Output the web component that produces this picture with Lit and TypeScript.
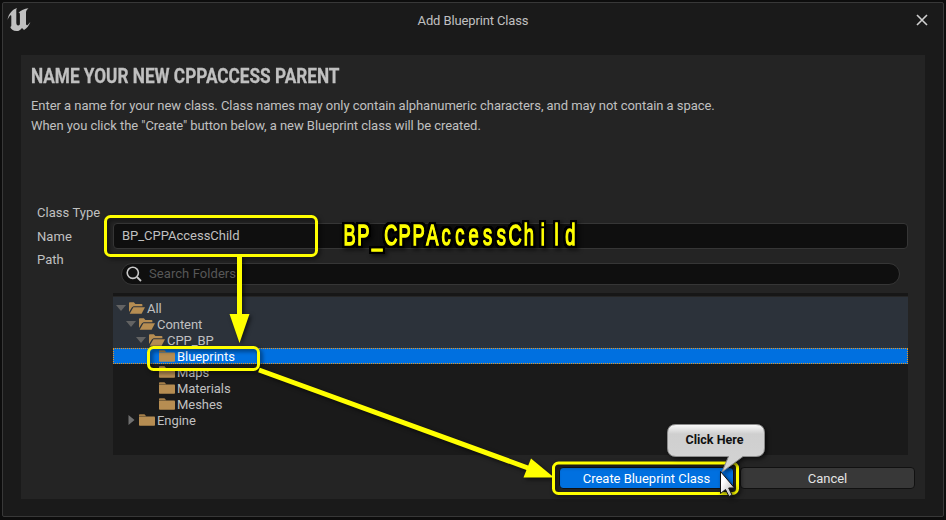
import { LitElement, html, svg, css } from "lit";
import { customElement } from "lit/decorators.js";
import { classMap } from "lit/directives/class-map.js";

interface Folder {
  name: string;
  depth: number;
  state: "open" | "closed" | "leaf";
  tint?: boolean;
  selected?: boolean;
}

const FOLDERS: Folder[] = [
  { name: "All", depth: 0, state: "open", tint: true },
  { name: "Content", depth: 1, state: "open", tint: true },
  { name: "CPP_BP", depth: 2, state: "open", tint: true },
  { name: "Blueprints", depth: 3, state: "leaf", selected: true },
  { name: "Maps", depth: 3, state: "leaf" },
  { name: "Materials", depth: 3, state: "leaf" },
  { name: "Meshes", depth: 3, state: "leaf" },
  { name: "Engine", depth: 1, state: "closed" },
];

const closedFolder = html`<svg width="16" height="12" viewBox="0 0 16 12">
  <path d="M0 2.2V1Q0 .3 .7 .3H5.5L7.2 2.2Z" fill="#a57f49" />
  <path d="M0 2.6H15.2Q16 2.6 16 3.4V11Q16 11.8 15.2 11.8H.8Q0 11.8 0 11Z" fill="#b68d52" />
</svg>`;

const openFolder = html`<svg width="16" height="12" viewBox="0 0 16 12">
  <path d="M0 10V1Q0 .2 .8 .2H4.8L6.4 2H12.6Q13.4 2 13.4 2.8V4.2H4.6L3 5.2Z" fill="#b68d52" />
  <path d="M4.4 5.2H16L12.6 11.8H.7Z" fill="#b68d52" />
</svg>`;

@customElement("folder-row")
class FolderRow extends LitElement {
  static properties = { folder: { attribute: false } };
  declare folder: Folder;

  static styles = css`
    :host { display: block; }
    .row {
      height: 16px;
      display: flex;
      align-items: center;
      box-sizing: border-box;
      color: #c0c0c0;
      font-size: 13px;
      line-height: 16px;
      letter-spacing: -0.05px;
      white-space: pre;
    }
    .tint { background: #2c323a; }
    .selected {
      background: #0070e0;
      color: #fff;
      outline: 1px dotted #e8951c;
      outline-offset: -1px;
    }
    .twist { width: 16px; height: 16px; display: flex; align-items: center; justify-content: center; }
    .folder { width: 16px; height: 12px; margin-right: 2px; flex: none; }
    .text { padding-top: 2px; }
    svg { display: block; }
  `;

  render() {
    const f = this.folder;
    return html`<div
      class=${classMap({ row: true, tint: !!f.tint, selected: !!f.selected })}
      style="padding-left:${f.depth * 10}px"
    ><span class="twist">${f.state === "open"
        ? html`<svg width="10" height="8"><path d="M0 1H10L5 7Z" fill="#636363" /></svg>`
        : f.state === "closed"
          ? html`<svg width="8" height="10"><path d="M1.5 0V10L7.5 5Z" fill="#707070" /></svg>`
          : ""}</span><span class="folder">${f.state === "open" ? openFolder : closedFolder}</span><span class="text">${f.name}</span></div>`;
  }
}

const CALLOUT = "BP_CPPAccessChild";

@customElement("app-root")
class AppRoot extends LitElement {
  static styles = css`
    :host {
      display: block;
      position: relative;
      width: 946px;
      height: 520px;
      box-sizing: border-box;
      padding: 2px 2px 3px;
      background: #0d0d0d;
      overflow: hidden;
      font-family: Roboto, "Liberation Sans", sans-serif;
      font-size: 13px;
      color: #c0c0c0;
    }
    svg { display: block; }
    .window {
      height: 515px;
      box-sizing: border-box;
      border: 1px solid #383838;
      border-radius: 2px;
      background: #1a1a1a;
      display: flex;
      flex-direction: column;
      padding: 0 18px;
    }
    .titlebar {
      height: 52px;
      margin: 0 -18px;
      display: grid;
      grid-template-columns: 40px 1fr 40px;
      align-items: start;
      flex: none;
    }
    .logo { padding: 4px 0 0 4px; }
    .title { text-align: center; line-height: 16px; padding-top: 10px; letter-spacing: -0.13px; }
    .close { padding: 11px 0 0 13px; }
    .panel {
      width: 904px;
      height: 444px;
      box-sizing: border-box;
      background: #242424;
      padding: 8px 10px 0;
      display: flex;
      flex-direction: column;
    }
    h1 {
      margin: 0;
      font-size: 21px;
      line-height: 26px;
      font-weight: 700;
      white-space: nowrap;
      transform-origin: 0 50%;
      transform: scaleX(0.819);
      -webkit-text-stroke: 0.3px #c0c0c0;
    }
    .intro { margin: 7px 0 0; line-height: 20px; letter-spacing: -0.045px; }
    .form {
      margin-top: 66px;
      padding-left: 6px;
      display: grid;
      grid-template-columns: 76px 795px;
      grid-template-rows: 21px 26px 14px 22px;
    }
    .label { line-height: 16px; letter-spacing: 0.05px; align-self: center; }
    .label.type { align-self: end; grid-row: 1; padding-bottom: 2px; }
    .label.name { grid-row: 2; padding-top: 2px; }
    .label.path { grid-row: 3 / 5; align-self: start; padding-top: 3px; }
    .name-input {
      grid-column: 2;
      grid-row: 2;
      border: 1px solid #363636;
      border-radius: 4px;
      background: #0f0f0f;
      padding-left: 8px;
      line-height: 24px;
      letter-spacing: -0.02px;
    }
    .search {
      grid-column: 2;
      grid-row: 4;
      margin: 0 8px;
      border: 1px solid #363636;
      border-radius: 12px;
      background: #0f0f0f;
      display: flex;
      align-items: center;
      gap: 7px;
      padding-left: 4px;
      color: #575757;
      letter-spacing: 0.07px;
    }
    .hint { padding-bottom: 2px; }
    .tree {
      margin: 8px 0 0 82px;
      width: 795px;
      height: 162px;
      box-sizing: border-box;
      border-top: 3px solid #171717;
      background: #1a1a1a;
    }
    .tree-head { height: 4px; background: #2c323a; border-top: 1px solid #262626; box-sizing: border-box; }
    .actions {
      margin: 12px 0 0;
      display: flex;
      justify-content: flex-end;
      gap: 6px;
    }
    .button {
      width: 175px;
      height: 22px;
      box-sizing: border-box;
      border: 1px solid #111;
      border-radius: 4px;
      background: #383838;
      color: #e4e4e4;
      text-align: center;
      line-height: 22px;
      letter-spacing: -0.03px;
    }
    .primary { background: #0070e0; color: #fff; }
    .overlay { position: absolute; inset: 0; }
    .shadow { filter: drop-shadow(2px 2px 2px rgba(0, 0, 0, 0.6)); }
    .callout {
      font: 400 29px "Liberation Sans", sans-serif;
      fill: #ffff00;
      stroke: #ffff00;
      stroke-width: 1.4px;
      text-anchor: middle;
    }
    .bubble-text { font: 700 12.5px Roboto, sans-serif; fill: #111; text-anchor: middle; }
  `;

  private annotations() {
    const xs = [...CALLOUT].map((_, i) => ((7.5 + i * 13.8) / 0.63).toFixed(1)).join(" ");
    return svg`
      <defs>
        <linearGradient id="bubble" x1="0" y1="0" x2="0" y2="1">
          <stop offset="0" stop-color="#fafafa" />
          <stop offset=".2" stop-color="#cfcfcf" />
          <stop offset="1" stop-color="#d4d4d4" />
        </linearGradient>
        <linearGradient id="cursor" x1="0" y1="0" x2="1" y2="1">
          <stop offset=".3" stop-color="#fff" />
          <stop offset="1" stop-color="#aaa" />
        </linearGradient>
        <filter id="outline" filterUnits="userSpaceOnUse" x="330" y="210" width="260" height="50" color-interpolation-filters="sRGB">
          <feMorphology in="SourceAlpha" operator="dilate" radius="2" result="fat" />
          <feGaussianBlur in="fat" stdDeviation=".7" result="soft" />
          <feComponentTransfer in="soft" result="edge"><feFuncA type="linear" slope="2.5" /></feComponentTransfer>
          <feMerge><feMergeNode in="edge" /><feMergeNode in="SourceGraphic" /></feMerge>
        </filter>
      </defs>
      <g class="shadow" fill="none" stroke="#ffff00" stroke-width="3">
        <rect x="105.5" y="216.5" width="211" height="39" rx="5" />
        <path d="M239.5 256V316" stroke-width="5" />
        <path d="M229.5 314H249.5L239.5 343Z" fill="#ffff00" stroke="none" />
        <rect x="148.5" y="347.5" width="110" height="22" rx="5" />
        <path d="M259 370L528 468" stroke-width="5" />
        <path d="M531 458.500L554 477.500L523.500 477.500Z" fill="#ffff00" stroke="none" />
        <rect x="553.5" y="463" width="184" height="30.5" rx="5" />
      </g>
      <g class="shadow"><g filter="url(#outline)"><g transform="translate(342 245) scale(.63 1)">
        <text class="callout" x=${xs} y="0">${CALLOUT}</text>
      </g></g></g>
      <g class="shadow">
        <path d="M676 424.5H756Q764.5 424.5 764.5 433V448Q764.5 456.5 756 456.5H743L722 472L728.5 456.5H676Q667.5 456.5 667.5 448V433Q667.5 424.5 676 424.5Z" fill="url(#bubble)" stroke="#8b8b8b" />
      </g>
      <text class="bubble-text" x="714.5" y="444">Click Here</text>
      <path class="shadow" d="M720.5 471.5V493.500L725.5 489.5L729 496.500L732 495L728.700 488H734.500Z" fill="url(#cursor)" stroke="#111" />
    `;
  }

  render() {
    return html`
      <div class="window">
        <header class="titlebar">
          <span class="logo"><svg width="25" height="25" viewBox="0 0 25 25">
            <path fill="#c0c0c0" d="M.5 13C1.5 6.5 5.5 2.5 10 1C9.1 2.5 9.3 3.500 9.300 5V15.500C9.300 17.500 10 18.500 11.200 18.500C12.400 18.500 12.900 17.800 12.900 16.500V7.500C12.900 6.200 12.600 5.500 11.400 5.800C14.300 3 17.300 1.800 21.500 1.200C19.500 2.800 19 4 19 5.500V16.500C19 18 19.700 18.600 20.500 18C21.500 17.300 22.400 16 23.400 14.700C22 18.700 20 21.300 17 23L15 20.900C13.500 22.800 12 24 9.500 24C6 24 4 22.300 3.200 19.800C4.200 20 4.300 19.300 4.300 18V9.500C4.300 8.200 3.900 7.800 3 8.700C1.800 9.800 1.300 11.300 .5 13Z" />
          </svg></span>
          <span class="title">Add Blueprint Class</span>
          <span class="close"><svg width="12" height="12"><path d="M1 1L11 11M11 1L1 11" stroke="#d0d0d0" stroke-width="1.6" /></svg></span>
        </header>
        <main class="panel">
          <h1>NAME YOUR NEW CPPACCESS PARENT</h1>
          <p class="intro">Enter a name for your new class. Class names may only contain alphanumeric characters, and may not contain a space.<br />When you click the "Create" button below, a new Blueprint class will be created.</p>
          <section class="form">
            <span class="label type">Class Type</span>
            <span class="label name">Name</span>
            <div class="name-input">BP_CPPAccessChild</div>
            <span class="label path">Path</span>
            <div class="search">
              <svg width="16" height="16"><circle cx="6.8" cy="6.8" r="5.6" fill="none" stroke="#c8c8c8" stroke-width="1.6" /><path d="M11 11L15 15" stroke="#c8c8c8" stroke-width="1.8" /></svg>
              <span class="hint">Search Folders</span>
            </div>
          </section>
          <section class="tree">
            <div class="tree-head"></div>
            ${FOLDERS.map((f) => html`<folder-row .folder=${f}></folder-row>`)}
          </section>
          <footer class="actions">
            <div class="button primary">Create Blueprint Class</div>
            <div class="button">Cancel</div>
          </footer>
        </main>
      </div>
      <svg class="overlay" width="946" height="520">${this.annotations()}</svg>
    `;
  }
}
